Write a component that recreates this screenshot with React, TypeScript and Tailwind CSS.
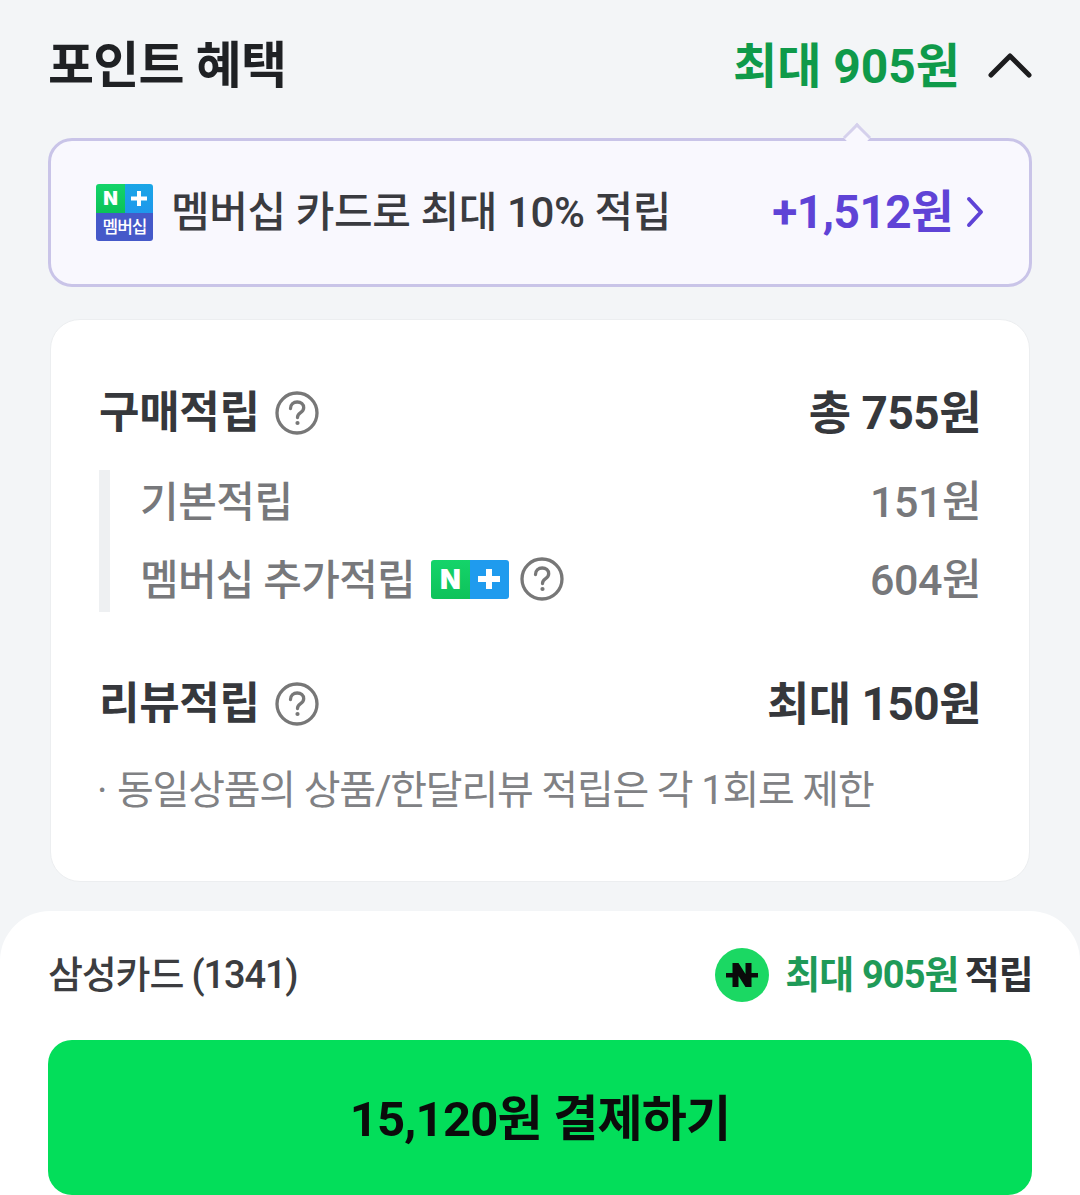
import React from "react";

function Help({ size = 44 }: { size?: number }) {
  return (
    <svg width={size} height={size} viewBox="0 0 44 44" fill="none" className="shrink-0">
      <circle cx="22" cy="22" r="20" stroke="#777" strokeWidth="3.3" />
      <path d="M15.5 17.5c0-4 3-6.5 6.7-6.5 3.8 0 6.5 2.4 6.5 5.7 0 2.6-1.5 3.9-3.4 5.2-1.9 1.3-2.8 2.3-2.8 4.6" stroke="#777" strokeWidth="3.3" strokeLinecap="round" />
      <circle cx="22.5" cy="32" r="2.1" fill="#777" />
    </svg>
  );
}

function Plus({ w, h, t }: { w: number; h: number; t: number }) {
  return (
    <svg width={w} height={h} viewBox={`0 0 ${w} ${h}`} fill="#fff">
      <rect x="0" y={(h - t) / 2} width={w} height={t} />
      <rect x={(w - t) / 2} y="0" width={t} height={h} />
    </svg>
  );
}

function MembershipBadge() {
  return (
    <div className="w-[57px] h-[57px] rounded-[3px] overflow-hidden flex flex-col shrink-0">
      <div className="flex h-[29px]">
        <div className="w-[29px] bg-gradient-to-b from-[#14d46a] to-[#0bc257] flex items-center justify-center text-white text-[19px] font-black leading-none font-['Inter',sans-serif]">N</div>
        <div className="w-[28px] bg-gradient-to-b from-[#1aa6e6] to-[#1f97ec] flex items-center justify-center">
          <Plus w={16} h={15} t={4} />
        </div>
      </div>
      <div className="flex-1 bg-[#4559c9] flex items-center justify-center text-white text-[17px] font-medium leading-none tracking-[-1px]">멤버십</div>
    </div>
  );
}

function InlineBadge() {
  return (
    <div className="w-[78px] h-[39px] rounded-[3px] overflow-hidden flex shrink-0">
      <div className="w-[39px] bg-gradient-to-b from-[#14d46a] to-[#0fc25a] flex items-center justify-center text-white text-[27px] font-black leading-none font-['Inter',sans-serif]">N</div>
      <div className="w-[39px] bg-[#1f9bee] flex items-center justify-center">
        <Plus w={22} h={20} t={6} />
      </div>
    </div>
  );
}

export default function App() {
  return (
    <div className="w-[1080px] h-[1195px] overflow-hidden bg-[#f3f5f7] flex flex-col font-['Roboto','Noto_Sans_CJK_KR',sans-serif]">
      <div className="flex-1 min-h-0 px-12 pt-[33px]">
        <div className="flex items-center justify-between h-[66px]">
          <h1 className="text-[50px] font-bold leading-none tracking-[-0.7px] text-[#1f2124]">포인트 혜택</h1>
          <div className="flex items-center">
            <span className="mt-[2px] text-[48px] font-bold leading-none text-[#0f9a4a]">최대 905원</span>
            <svg width="44" height="28" viewBox="0 0 44 28" fill="none" className="ml-[28px]">
              <path d="M3 23 22 4l19 19" stroke="#1c1c1e" strokeWidth="5" strokeLinecap="round" strokeLinejoin="round" />
            </svg>
          </div>
        </div>

        <div className="relative mt-[39px] h-[149px] rounded-[24px] border-[3px] border-[#c9c4e8] bg-[#f9f8fe] flex items-center pl-[45px] pr-[45px]">
          <div className="absolute -top-[14px] right-[162px] w-[20px] h-[20px] rotate-45 origin-center bg-[#f9f8fe] border-l-[3px] border-t-[3px] border-[#d5d1ec]" />
          <MembershipBadge />
          <span className="ml-[18px] text-[42px] font-medium leading-none tracking-[-0.4px] text-[#3a3b40]">멤버십 카드로 최대 10% 적립</span>
          <span className="ml-auto -mt-[2px] text-[46px] font-bold leading-none tracking-[-0.5px] text-[#5f43d6]">+1,512원</span>
          <svg width="18" height="32" viewBox="0 0 18 32" fill="none" className="ml-[13px] -mt-[2px]">
            <path d="M3 3l12 13L3 29" stroke="#5f43d6" strokeWidth="4" strokeLinecap="round" strokeLinejoin="round" />
          </svg>
        </div>

        <div className="mt-[32px] mx-[2px] h-[563px] rounded-[30px] border border-[#eceef0] bg-white px-[48px] pt-[63px]">
          <div className="flex items-center justify-between h-[60px]">
            <div className="flex items-center gap-[15px]">
              <span className="text-[44px] font-bold leading-none tracking-[-0.3px] text-[#36383c]">구매적립</span>
              <Help />
            </div>
            <span className="text-[46px] font-bold leading-none tracking-[-0.5px] text-[#36383c]">총 755원</span>
          </div>

          <div className="mt-[27px] h-[142px] border-l-[11px] border-[#eef0f2] pl-[30px] flex flex-col gap-[16px]">
            <div className="flex items-center justify-between h-[62px]">
              <span className="mt-[3px] text-[42px] leading-none tracking-[-0.5px] text-[#77787b] font-medium">기본적립</span>
              <span className="mt-[2px] text-[43px] leading-none tracking-[-0.5px] text-[#77787b] font-medium">151원</span>
            </div>
            <div className="flex items-center justify-between h-[62px]">
              <div className="flex items-center">
                <span className="mt-[3px] text-[42px] leading-none tracking-[-0.75px] text-[#77787b] font-medium">멤버십 추가적립</span>
                <span className="ml-[16px]"><InlineBadge /></span>
                <span className="ml-[11px]"><Help /></span>
              </div>
              <span className="mt-[2px] text-[43px] leading-none tracking-[-0.5px] text-[#77787b] font-medium">604원</span>
            </div>
          </div>

          <div className="mt-[62px] flex items-center justify-between h-[60px]">
            <div className="flex items-center gap-[15px]">
              <span className="text-[44px] font-bold leading-none tracking-[-0.3px] text-[#36383c]">리뷰적립</span>
              <Help />
            </div>
            <span className="text-[46px] font-bold leading-none tracking-[-0.5px] text-[#36383c]">최대 150원</span>
          </div>
          <div className="mt-[37px] -ml-[2px] text-[40px] leading-none tracking-[-1.2px] text-[#808184]">
            <span className="mr-[2px]">·</span> 동일상품의 상품/한달리뷰 적립은 각 1회로 제한
          </div>
        </div>
      </div>

      <div className="h-[284px] shrink-0 rounded-t-[50px] bg-white px-12 pt-[36px]">
        <div className="flex items-center justify-between h-[56px]">
          <span className="text-[38px] font-medium leading-none tracking-[-1.15px] text-[#3c3d40]">삼성카드 (1341)</span>
          <div className="flex items-center">
            <div className="w-[54px] h-[54px] rounded-full bg-[#1bd863] flex items-center justify-center">
              <svg width="32" height="24" viewBox="0 0 32 24" fill="#0a0a0a">
                <path d="M6.5 24V0h6l7 11V0H25.500v24h-6l-7-11v11z" />
                <rect x="0" y="10" width="7" height="4.500" />
                <rect x="25" y="10" width="7" height="4.500" />
              </svg>
            </div>
            <span className="ml-[16px] text-[38px] font-bold leading-none tracking-[-0.9px] text-[#1f9a58]">최대 905원</span>
            <span className="ml-[6px] -mr-[1px] text-[38px] font-bold leading-none tracking-[-0.8px] text-[#303236]">적립</span>
          </div>
        </div>
        <div className="mt-[37px] h-[155px] rounded-[24px] bg-[#03de5a] flex items-center justify-center pt-[3px] text-[49px] font-bold leading-none tracking-[-0.8px] text-[#0b0b0b]">
          15,120원 결제하기
        </div>
      </div>
    </div>
  );
}
